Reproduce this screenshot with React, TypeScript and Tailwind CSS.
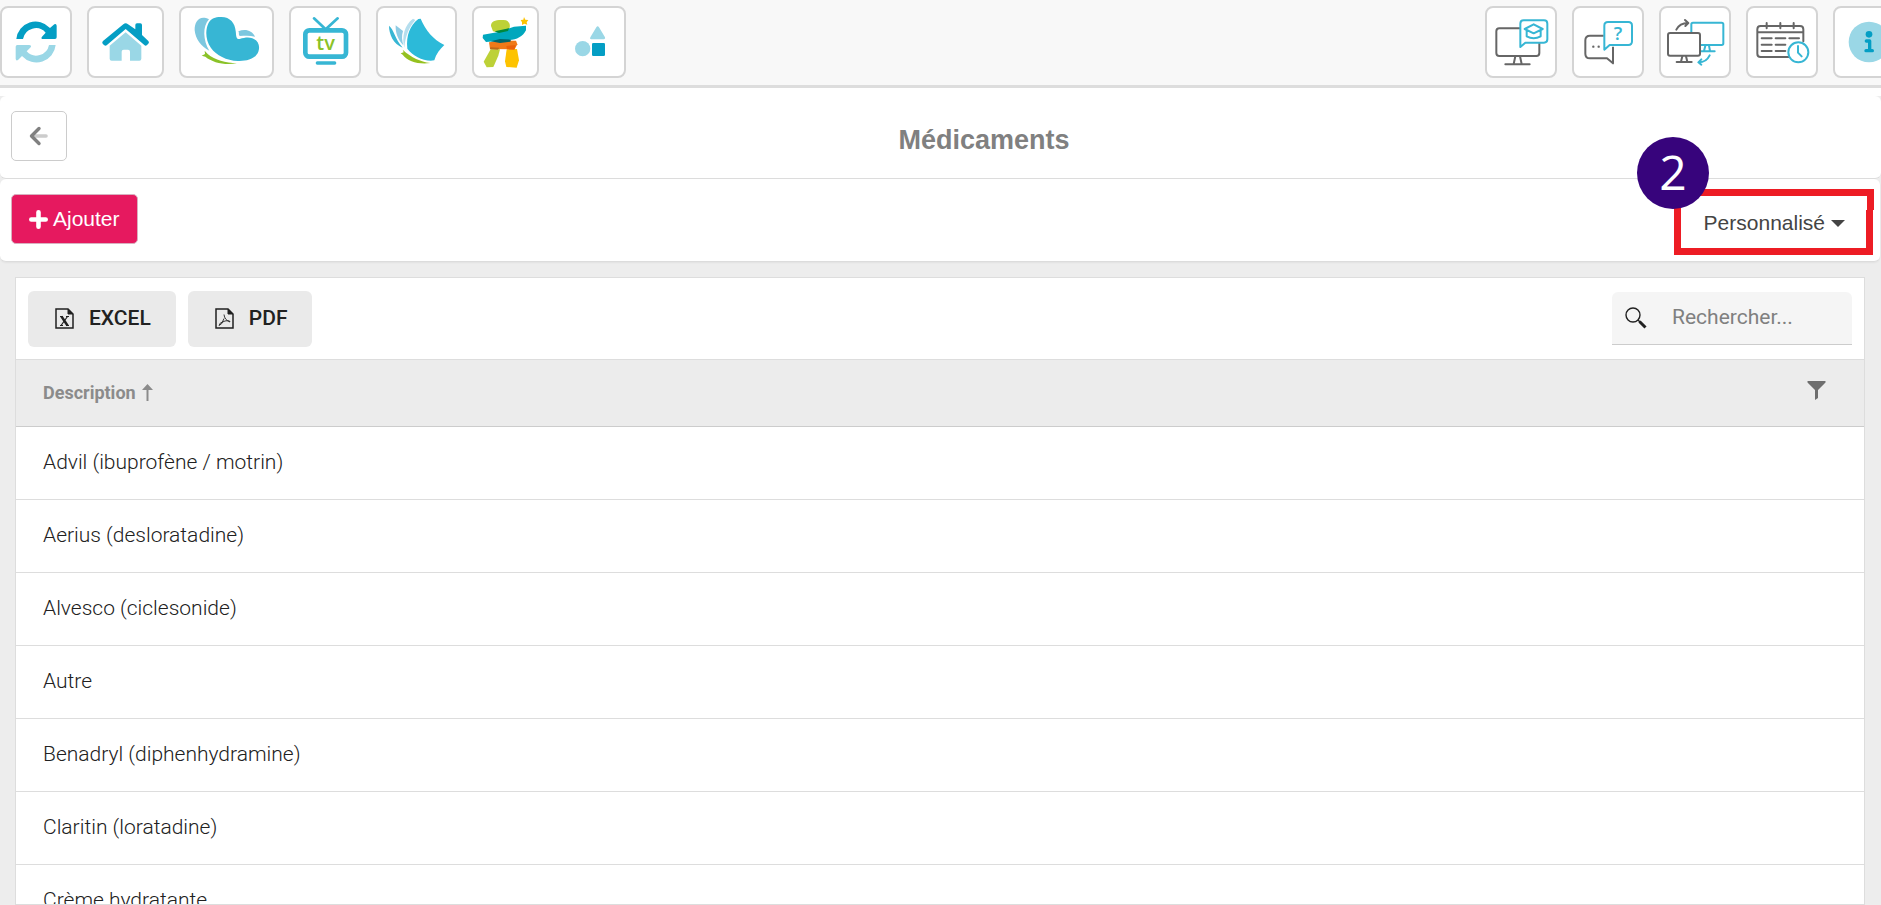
import type { ReactNode } from 'react';

const TEAL = '#049ec4';
const PALE = '#9ad7e6';
const CYAN = '#37b6d4';
const GRAY = '#666666';

function Tile({ label, box, className, children }: { label: string; box: string; className: string; children: ReactNode }) {
  return (
    <button
      type="button"
      aria-label={label}
      className={`h-[72px] shrink-0 rounded-lg border-2 border-[#d4d4d4] bg-white ${className}`}
    >
      <svg viewBox={box} className="block h-full w-full" fill="none">
        {children}
      </svg>
    </button>
  );
}

function LeftTiles() {
  return (
    <div className="flex gap-[15px]">
      <Tile label="Actualiser" box="6 24 204 204" className="w-[72px]">
        <path d="M49 117 A58 58 0 0 1 150 84 L163 73 Q169 69 170 77 V112 Q170 117 165 117 H130 Q121 117 126 110 L137 98 A39 39 0 0 0 69 117 Z" fill={TEAL} />
        <path d="M167 135 A58 58 0 0 1 66 168 L54 180 Q48 184 47 176 V140 Q47 135 52 135 H87 Q96 136 92 142 L80 154 A39 39 0 0 0 147 135 Z" fill={PALE} />
      </Tile>
      <Tile label="Accueil" box="264 24 219 204" className="w-[77px]">
        <path d="M374 97 L421 137 V176 Q421 182 415 182 H387 V155 Q387 149 381 149 H368 Q362 149 362 155 V182 H332 Q326 182 326 176 V137 Z" fill={PALE} />
        <path d="M403 88 V75 Q403 70 408 70 H418 Q423 70 423 75 V105 L442 123 Q446 127 442 131 L438 135 Q434 139 430 135 L374 87 L317 136 Q313 139 309 135 L305 131 Q302 127 306 123 L367 73 Q374 67 381 73 Z" fill={TEAL} />
      </Tile>
      <Tile label="Papillon" box="540 24 273 204" className="w-[95px]">
        <path d="M624 58 C596 44 580 64 581 91 C583 116 601 141 625 152 C606 122 604 79 624 58 Z" fill="#7cc7df" />
        <path d="M712 94 C733 86 753 91 762 110 C745 106 730 108 716 108 C711 104 716 99 712 94 Z" fill="#7cc7df" />
        <path d="M659 51 C687 50 702 69 704 93 C706 106 704 119 716 117 C731 113 742 111 754 115 C772 121 778 138 772 155 C763 176 740 184 711 183 C676 182 646 166 630 144 C612 119 613 86 623 68 C631 55 642 51 659 51 Z" fill={CYAN} />
        <path d="M611 152 L620 162 C643 181 673 188 708 190 C670 196 635 188 613 170 L602 167 L612 162 Z" fill="#8ac228" />
      </Tile>
      <Tile label="Télévision" box="60 24 204 204" className="w-[72px]">
        <path d="M129 55 L164 88 L200 55" stroke={CYAN} strokeWidth="8" strokeLinecap="round" />
        <rect x="103" y="91" width="122" height="79" rx="12" stroke={CYAN} strokeWidth="14" />
        <path d="M139 189 H191" stroke={CYAN} strokeWidth="10" strokeLinecap="round" />
        <text x="164" y="150" textAnchor="middle" fill="#8ac228" className="font-['Open_Sans',sans-serif] text-[60px] font-semibold">tv</text>
      </Tile>
      <Tile label="Livre" box="324 24 231 204" className="w-[81px]">
        <path d="M357 77 C372 88 374 116 398 143 C370 132 357 103 357 77 Z" fill={CYAN} />
        <path d="M377 76 L399 93 C394 108 396 122 400 136 C383 119 376 98 377 76 Z" fill="#8ecbe4" />
        <path d="M429 56 L436 60 C414 86 406 112 403 143 C395 110 403 75 429 56 Z" fill="#b5deee" />
        <path d="M452 56 C467 92 489 117 523 135 C510 147 498 162 493 181 C463 186 430 169 412 146 C408 106 420 76 445 57 Z" fill="#2cbad9" />
        <path d="M398 149 C425 174 451 184 481 189 C446 194 413 184 398 164 L392 160 L401 157 Z" fill="#95c11f" />
      </Tile>
      <Tile label="Inukshuk" box="612 24 189 204" className="w-[67px]">
        <path d="M662 148 L690 148 L685 167 L670 201 L650 202 L641 185 Z" fill="#bdd137" />
        <path d="M710 148 L741 147 L747 181 L740 203 L709 201 L705 184 Z" fill="#fdc300" />
        <path d="M657 127 L690 123 L738 122 L742 133 L734 148 L660 147 Z" fill="#ef7918" />
        <path d="M663 78 C662 62 682 58 708 61 C720 66 722 79 717 88 L690 99 L669 94 Z" fill="#bdd137" />
        <path d="M639 104 L681 97 L732 80 L768 77 V91 C758 110 741 119 718 120 L648 126 L638 114 Z" fill="#00a7bd" />
        <path d="M674 94 L717 85 L714 93 L687 99 Z" fill="#00883c" />
        <path d="M662 124 L690 117 L723 119 L721 125 L690 129 Z" fill="#00656b" />
        <path d="M709 138 L737 135 L733 149 L711 148 Z" fill="#ea6108" />
        <path d="M661 142 L688 143 L684 149 L660 148 Z" fill="#bb6818" />
        <path d="M762 51 L766 59 L775 60 L770 67 L772 74 L763 71 L756 75 L756 67 L752 60 L760 59 Z" fill="#fdc300" />
      </Tile>
      <Tile label="Formes" box="858 24 204 204" className="w-[72px]">
        <path d="M979 82 Q983 76 987 82 L1005 112 Q1007 117 1002 118 H963 Q958 117 961 112 Z" fill={PALE} />
        <circle cx="938" cy="146" r="23" fill={PALE} />
        <rect x="966" y="129" width="39" height="39" rx="4" fill={TEAL} />
      </Tile>
    </div>
  );
}

function RightTiles() {
  return (
    <div className="-mr-6 flex gap-[15px]">
      <Tile label="Formation" box="51 24 204 204" className="w-[72px]">
        <rect x="79" y="85" width="129" height="83" rx="9" stroke={GRAY} strokeWidth="6" />
        <path d="M136 169 L131 192 M150 169 L155 192 M106 193 H179" stroke={GRAY} strokeWidth="6" strokeLinecap="round" />
        <path d="M151 141 V71 Q151 61 161 61 H222 Q232 61 232 71 V118 Q232 128 222 128 H166 Z" fill="#fff" stroke={CYAN} strokeWidth="6" strokeLinejoin="round" />
        <path d="M164 87 L191 73 L218 87 L191 100 Z M170 92 V109 Q191 120 212 109 V92" stroke={CYAN} strokeWidth="6" strokeLinejoin="round" />
      </Tile>
      <Tile label="Questions" box="309 24 204 204" className="w-[72px]">
        <path d="M398 107 H357 Q343 107 343 121 V161 Q343 175 357 175 H408 L426 190 V140" stroke={GRAY} strokeWidth="6" strokeLinejoin="round" />
        <circle cx="367" cy="140" r="3.500" fill={GRAY} />
        <circle cx="383" cy="140" r="3.500" fill={GRAY} />
        <path d="M400 149 V77 Q400 66 411 66 H472 Q483 66 483 77 V124 Q483 135 472 135 H416 Z" fill="#fff" stroke={CYAN} strokeWidth="6" strokeLinejoin="round" />
        <text x="441" y="120" textAnchor="middle" fill={CYAN} className="font-['Open_Sans',sans-serif] text-[56px] font-semibold">?</text>
      </Tile>
      <Tile label="Partage d'écran" box="573 24 204 204" className="w-[72px]">
        <rect x="664" y="68" width="96" height="67" rx="5" stroke={CYAN} strokeWidth="6" />
        <path d="M706 137 L702 153 M717 137 L720 153 M690 154 H734" stroke={CYAN} strokeWidth="6" strokeLinecap="round" />
        <rect x="594" y="99" width="96" height="68" rx="6" fill="#fff" stroke={GRAY} strokeWidth="6" />
        <path d="M637 169 L633 185 M648 169 L652 185 M620 186 H665" stroke={GRAY} strokeWidth="6" strokeLinecap="round" />
        <path d="M619 89 Q629 69 654 69 M645 60 L655 69 L646 78" stroke={GRAY} strokeWidth="6" strokeLinecap="round" strokeLinejoin="round" />
        <path d="M719 166 Q709 187 686 187 M694 178 L685 187 L694 194" stroke={CYAN} strokeWidth="6" strokeLinecap="round" strokeLinejoin="round" />
      </Tile>
      <Tile label="Calendrier" box="831 24 204 204" className="w-[72px]">
        <path d="M952 171 H869 Q859 171 859 161 V88 Q859 78 869 78 H987 Q997 78 997 88 V124 M859 97 H997 M887 69 V85 M928 69 V85 M968 69 V85" stroke={GRAY} strokeWidth="6" strokeLinecap="round" />
        <path d="M872 115 H902 M914 115 H943 M955 115 H984 M872 134 H902 M914 134 H943 M872 153 H902 M914 153 H943" stroke={GRAY} strokeWidth="6" strokeLinecap="round" />
        <circle cx="982" cy="157" r="30" fill="#fff" stroke={CYAN} strokeWidth="6" />
        <path d="M981 138 V158 L992 169" stroke={CYAN} strokeWidth="6" strokeLinecap="round" />
      </Tile>
      <Tile label="Information" box="1095 24 204 204" className="w-[72px]">
        <circle cx="1197" cy="126" r="61" fill={PALE} />
        <circle cx="1197" cy="103" r="10" fill={TEAL} />
        <path d="M1189 123 H1199 V152 M1188 152 H1207" stroke={TEAL} strokeWidth="10" strokeLinejoin="round" strokeLinecap="round" />
      </Tile>
    </div>
  );
}

const medications = [
  'Advil (ibuprofène / motrin)',
  'Aerius (desloratadine)',
  'Alvesco (ciclesonide)',
  'Autre',
  'Benadryl (diphenhydramine)',
  'Claritin (loratadine)',
  'Crème hydratante',
];

export default function App() {
  return (
    <div className="flex h-screen flex-col overflow-hidden bg-[#ededed] font-['Liberation_Sans',Arial,sans-serif]">
      <nav className="flex h-22 shrink-0 justify-between overflow-hidden border-b-3 border-[#dddddd] bg-[#f8f8f8] pt-1.5">
        <LeftTiles />
        <RightTiles />
      </nav>
      <div className="h-2 shrink-0 bg-white" />

      <header className="flex h-[83px] shrink-0 items-center gap-5 rounded-md border-b border-[#dcdcdc] bg-white pb-0.5 pl-[11px]">
        <button type="button" aria-label="Retour" className="flex h-[50px] w-14 shrink-0 items-center justify-center rounded-[5px] border border-[#cccccc]">
          <svg viewBox="0 0 20 20" className="h-5 w-5" fill="none" strokeLinecap="round" strokeLinejoin="round">
            <path d="M4 10 H17" stroke="#cccccc" strokeWidth="3.6" />
            <path d="M10 2.500 L2.500 10 L10 17.500" stroke="#808080" strokeWidth="3.400" />
          </svg>
        </button>
        <h1 className="flex-1 pt-2 text-center text-[27px] font-bold text-[#808080]">Médicaments</h1>
      </header>

      <div className="mr-px flex h-[83px] shrink-0 items-start justify-between rounded-md border-b border-[#dcdcdc] bg-white pt-[15px] pl-[11px] shadow-xs">
        <button type="button" className="flex h-[50px] items-center gap-[5px] rounded-[5px] border border-[#d8b0bf] bg-[#e6195f] px-[17px] text-[21px] text-white">
          <svg viewBox="0 0 19 19" className="size-[19px]" stroke="#fff" strokeWidth="4.600" strokeLinecap="round">
            <path d="M9.500 2.300 V16.700 M2.300 9.500 H16.700" />
          </svg>
          Ajouter
        </button>
        <div className="relative mt-[3px] mr-[7px]">
          <button type="button" aria-haspopup="menu" className="flex h-[52px] items-center gap-1.5 px-7 text-[21px] text-[#444444]">
            Personnalisé
            <svg viewBox="0 0 14 7" className="h-[7px] w-3.5">
              <path d="M0 0 H14 L7 7 Z" fill="#444444" />
            </svg>
          </button>
          <svg viewBox="0 0 200 66" className="pointer-events-none absolute -top-2 -right-px h-[66px] w-[200px]">
            <path fillRule="evenodd" d="M0 0 H200 V21 H199 V66 H0 Z M7 7 V59 H192 V21 H193 V7 Z" fill="#ed1c24" />
          </svg>
          <div className="pointer-events-none absolute -top-[60px] right-[164px] flex size-[72px] items-center justify-center rounded-full bg-[#37047c] pb-0.5 font-['Open_Sans','Noto_Sans',sans-serif] text-[48px] leading-none text-white">
            2
          </div>
        </div>
      </div>

      <main className="mr-4 ml-[15px] mt-[15px] flex min-h-0 flex-1 flex-col border border-[#dddddd] bg-white font-[Roboto,sans-serif]">
        <div className="flex h-[81px] shrink-0 items-center justify-between px-3">
          <div className="flex gap-3">
            <button type="button" className="flex h-14 items-center gap-[15px] rounded-md bg-[#eaeaea] pr-[25px] pl-[27px] text-[21px] font-medium text-[#212121]">
              <svg viewBox="0 0 19 21" className="h-[21px] w-[19px]" fill="none" stroke="#212121">
                <path d="M1 1 H13 L18 6 V20 H1 Z" strokeWidth="1.500" />
                <path d="M13 1 V6 H18 Z" fill="#212121" />
                <path d="M6.500 8.500 L12.500 17.500" strokeWidth="2.400" />
                <path d="M12.500 8.500 L6 17.500 M5 8.500 H8 M11 8.500 H14 M5 17.500 H8 M11 17.500 H14" strokeWidth="1.200" />
              </svg>
              EXCEL
            </button>
            <button type="button" className="flex h-14 items-center gap-[15px] rounded-md bg-[#eaeaea] pr-[25px] pl-[27px] text-[21px] font-medium text-[#212121]">
              <svg viewBox="0 0 19 21" className="h-[21px] w-[19px]" fill="none" stroke="#212121">
                <path d="M1 1 H13 L18 6 V20 H1 Z" strokeWidth="1.500" />
                <path d="M13 1 V6 H18 Z" fill="#212121" />
                <path d="M9 6.500 Q9.500 12 15 14 Q15 12 10 13 Q4 14.500 4 17.500 Q7 17 9 10.500" strokeWidth="0.900" />
              </svg>
              PDF
            </button>
          </div>
          <label className="flex h-[53px] w-60 items-center gap-[25px] rounded-t-md border-b border-[#cccccc] bg-[#f5f5f5] pl-[13px]">
            <svg viewBox="0 0 22 22" className="h-[22px] w-[22px] shrink-0" fill="none" stroke="#212121">
              <circle cx="8" cy="8" r="7" strokeWidth="1.400" />
              <path d="M13 13 L15 15" strokeWidth="1.500" />
              <path d="M14.500 14.500 L20.500 20.500" strokeWidth="3" />
            </svg>
            <input type="text" aria-label="Rechercher" placeholder="Rechercher..." className="w-full min-w-0 bg-transparent text-[21px] text-[#333333] outline-none placeholder:text-[#808080]" />
          </label>
        </div>
        <div className="min-h-0 flex-1 overflow-hidden">
          <table className="w-full border-separate border-spacing-0 text-left">
            <thead>
              <tr>
                <th scope="col" aria-sort="ascending" className="h-[68px] border-y border-t-[#dddddd] border-b-[#cccccc] bg-[#ececec] px-[27px] pt-0 pb-0.5 text-[18px] font-bold text-[#8b8b8b]">
                  <div className="flex items-center justify-between">
                    <span className="flex items-center gap-1.5">
                      Description
                      <svg viewBox="0 0 11 17" className="h-[17px] w-[11px]">
                        <path d="M5.500 0 L11 6 H6.500 V17 H4.500 V6 H0 Z" fill="#8b8b8b" />
                      </svg>
                    </span>
                    <button type="button" aria-label="Filtrer" className="mr-[11px] mb-[3px]">
                      <svg viewBox="0 0 19 19" className="block h-[19px] w-[19px]">
                        <path d="M0.500 0 H18.500 V1.500 L11 9 V17 L8 19 V9 L0.500 1.500 Z" fill="#6e6e6e" />
                      </svg>
                    </button>
                  </div>
                </th>
              </tr>
            </thead>
            <tbody>
              {medications.map((name) => (
                <tr key={name}>
                  <td className="h-[73px] border-b border-[#dddddd] px-[27px] py-0 text-[21px] font-light text-[#212121]">{name}</td>
                </tr>
              ))}
            </tbody>
          </table>
        </div>
      </main>
    </div>
  );
}
